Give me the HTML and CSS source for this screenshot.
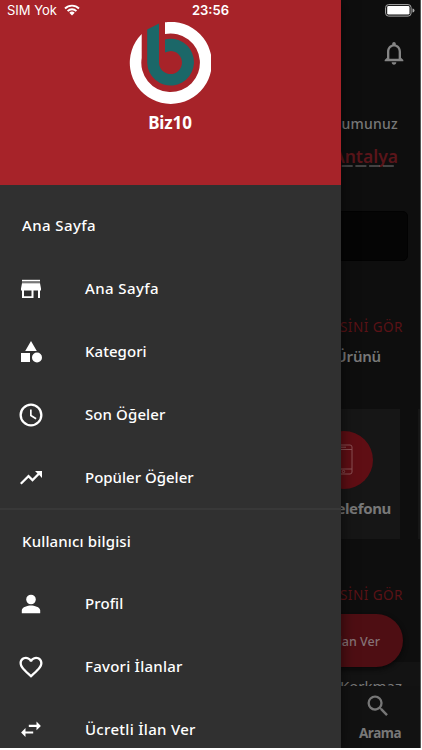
FILE: index.html
```html
<!DOCTYPE html>
<html lang="tr">
<head>
<meta charset="utf-8">
<title>Biz10</title>
<link rel="stylesheet" href="styles.css">
</head>
<body>
<div class="phone">
  <main class="page">
    <header class="topbar">
      <svg class="bell" viewBox="0 0 24 24"><path d="M12 22c1.100 0 2-.9 2-2h-4c0 1.100.9 2 2 2zm6-6v-5c0-3.070-1.630-5.640-4.500-6.320V4c0-.83-.67-1.500-1.500-1.500s-1.500.67-1.500 1.500v.68C7.640 5.360 6 7.920 6 11v5l-2 2v1h16v-1l-2-2zm-2 1H8v-6c0-2.480 1.510-4.500 4-4.500s4 2.020 4 4.500v6z"/></svg>
    </header>
    <section class="location">
      <div class="location-label"><span>Konumunuz</span></div>
      <div class="city"><span>Antalya</span></div>
      <svg class="dashes" viewBox="0 0 70 2"><path d="M0 1H68" stroke="#777" stroke-width="1" stroke-dasharray="11 2.700"/></svg>
    </section>
    <div class="searchbox"></div>
    <div class="see-all first"><span>HEPSİNİ GÖR</span></div>
    <div class="product">Ürünü</div>
    <section class="cards">
      <article class="card">
        <div class="disc"><svg viewBox="0 0 20 32"><rect x="1" y="1" width="17" height="29" rx="2"/><path d="M1 5.500h17M1 25h17M7 3.200h5"/><circle cx="9.500" cy="27.500" r="1.200"/></svg></div>
        <div class="card-title"><span>Cep Telefonu</span></div>
      </article>
      <article class="card next"></article>
    </section>
    <div class="see-all second"><span>HEPSİNİ GÖR</span></div>
    <section class="listing"><span>Korkmaz</span></section>
    <nav class="bottom">
      <div class="tab">
        <svg viewBox="0 0 24 24"><path d="M15.500 14h-.79l-.28-.27A6.471 6.471 0 0 0 16 9.500 6.500 6.500 0 1 0 9.500 16c1.610 0 3.090-.59 4.230-1.570l.27.28v.79l5 4.990L20.490 19l-4.990-5zm-6 0C7.010 14 5 11.990 5 9.500S7.010 5 9.500 5 14 7.010 14 9.500 11.990 14 9.500 14z"/></svg>
        <span>Arama</span>
      </div>
    </nav>
    <button class="post"><span>İlan Ver</span></button>
  </main>

  <aside class="drawer">
    <div class="brand">
      <svg class="logo" viewBox="0 0 82 82">
        <path class="ring" d="M36 0.300A41 41 0 1 1 12.700 12V36A29.300 29.300 0 1 0 36 12Z"/>
        <path class="letter" d="M18.200 7.500L30 1.500V41A11.500 11.500 0 1 0 36 30.500V17.400A23.400 23.400 0 1 1 18.200 41Z"/>
      </svg>
      <h1><span>Biz10</span></h1>
    </div>
    <section class="group">
      <h2>Ana Sayfa</h2>
      <div class="item"><svg viewBox="0 0 24 24"><path d="M21 2.800H3v1.700h18V2.800z"/><path class="dim" d="M3 4.500h18V6.200H3z"/><path d="M22 13.500v-2L21 6.200H3l-1 5.300v2h1V21h11.500v-7.500H19V21h2v-7.500h1zm-9.500 5.700H5v-5.700h7.500v5.700z"/></svg><span>Ana Sayfa</span></div>
      <div class="item"><svg viewBox="0 0 24 24"><path d="M12 1L6.200 11h11.600zM2 13h9v9H2z"/><circle cx="18" cy="17.500" r="5"/></svg><span class="kategori">Kategori</span></div>
      <div class="item"><svg viewBox="0 0 24 24"><path d="M11.990.5C5.700.5.5 5.700.5 12s5.200 11.500 11.490 11.500C18.300 23.500 23.500 18.300 23.500 12S18.300.5 11.990.5zM12 21.200a9.200 9.200 0 1 1 0-18.400 9.200 9.200 0 0 1 0 18.400zM12.700 6.500H11v6.500l5.700 3.400.85-1.400-4.850-2.900z"/></svg><span class="recent">Son Öğeler</span></div>
      <div class="item"><svg viewBox="0 0 24 24"><path d="M16 5l2.500 2.500-5 5-4-4L1 17l1.600 1.600 6.900-6.900 4 4 6.700-6.600L23 12V5z"/></svg><span class="popular">Popüler Öğeler</span></div>
    </section>
    <section class="group divided">
      <h2 class="user">Kullanıcı bilgisi</h2>
      <div class="item"><svg viewBox="0 0 24 24"><circle cx="12" cy="7.500" r="4.800"/><path d="M12 13.500c-3.100 0-9.200 1.500-9.200 4.800v3h18.400v-3c0-3.300-6.100-4.800-9.200-4.800z"/></svg><span class="profile">Profil</span></div>
      <div class="item"><svg viewBox="0 0 24 24"><path transform="translate(-1.800 -1.800) scale(1.150)" d="M16.500 3c-1.740 0-3.410.81-4.500 2.090C10.910 3.810 9.240 3 7.500 3 4.420 3 2 5.420 2 8.500c0 3.780 3.400 6.860 8.550 11.540L12 21.350l1.450-1.320C18.600 15.360 22 12.280 22 8.500 22 5.420 19.580 3 16.500 3zm-4.400 15.550l-.1.100-.1-.1C7.140 14.240 4 11.390 4 8.500 4 6.500 5.500 5 7.500 5c1.540 0 3.040.99 3.570 2.360h1.870C13.460 5.990 14.960 5 16.500 5c2 0 3.500 1.500 3.500 3.500 0 2.890-3.140 5.740-7.900 10.050z"/></svg><span class="favorites">Favori İlanlar</span></div>
      <div class="item"><svg viewBox="0 0 24 24"><path transform="translate(-1.200 -2) scale(1.100)" d="M6.990 11L3 15l3.990 4v-3H14v-2H6.990v-3zM21 9l-3.990-4v3H10v2h7.010v3L21 9z"/></svg><span class="paid">Ücretli İlan Ver</span></div>
    </section>
  </aside>

  <div class="status">
    <span class="carrier">SIM Yok</span>
    <svg class="wifi" viewBox="0 0 16 12"><path d="M1 4.500A10 10 0 0 1 15 4.500M3.600 7.100A6.300 6.300 0 0 1 12.400 7.100" fill="none" stroke="#fff" stroke-width="1.900"/><path d="M8 11.500L5.300 8.700A4 4 0 0 1 10.700 8.700Z" fill="#fff"/></svg>
    <span class="time">23:56</span>
    <svg class="battery" viewBox="0 0 30 13"><rect x=".6" y=".6" width="25.500" height="11.500" rx="3" fill="none" stroke="#aaa"/><rect x="2.200" y="2.100" width="22.300" height="8.500" rx="1.300" fill="#fff"/><path d="M27.500 4.500a2 2 0 0 1 0 4z" fill="#aaa"/></svg>
  </div>
</div>
</body>
</html>
```
FILE: styles.css
```css
* { box-sizing: border-box; }
body { margin: 0; background: #fff; font-family: "Noto Sans", sans-serif; }
svg { display: block; flex: none; }
.phone { position: relative; width: 421px; height: 748px; overflow: hidden; background: #0e0e0e; color: #fff; border-right: 1px solid #555; }
.page { display: flex; flex-direction: column; height: 748px; width: 421px; color: #787878; }
.topbar { height: 114px; padding: 39px 13px 0 0; display: flex; justify-content: flex-end; align-items: flex-start; }
.bell { width: 28px; height: 28px; fill: #858585; }
.location { height: 97px; padding-right: 23px; display: flex; flex-direction: column; align-items: flex-end; }
.location-label { font: 500 14px/20px "Noto Sans", sans-serif; letter-spacing: .25px; }
.city { margin-top: 11px; font: 600 17.500px/22px "Noto Sans", sans-serif; color: #5a151a; }
.dashes { width: 70px; height: 2px; margin-top: -2px; }
.searchbox { height: 50px; margin: 0 13px 0 16px; border: 1px solid #020202; border-radius: 5px; background: #050505; }
.see-all { height: 20px; padding-right: 18px; text-align: right; font-size: 13.500px; line-height: 20px; letter-spacing: .5px; color: #5a1216; }
.first { margin-top: 56px; }
.product { height: 22px; margin-top: 8px; padding-right: 40px; text-align: right; font-size: 15px; font-weight: 600; line-height: 22px; letter-spacing: -.2px; }
.cards { height: 130px; margin-top: 42px; display: flex; gap: 18px; padding-left: 288px; overflow: hidden; }
.card { flex: none; width: 112px; background: #161616; display: flex; flex-direction: column; align-items: center; padding-top: 22px; }
.disc { width: 58px; height: 58px; border-radius: 50%; background: #5f0e14; display: grid; place-items: center; }
.disc svg { width: 20px; height: 32px; fill: none; stroke: #8b5053; stroke-width: 1; }
.card-title { margin-top: 8px; font-size: 15px; font-weight: 700; line-height: 22px; letter-spacing: -.35px; white-space: nowrap; align-self: flex-end; padding-right: 9px; }
.second { margin-top: 46px; }
.listing { height: 24px; margin-top: 57px; background: #131313; padding: 12px 19px 0 0; text-align: right; font-size: 15px; line-height: 24px; overflow: hidden; }
.bottom { height: 62px; background: #121212; display: flex; justify-content: flex-end; padding: 6px 21px 0 0; position: relative; }
.tab { width: 40px; display: flex; flex-direction: column; align-items: center; font-size: 13.500px; font-weight: 700; line-height: 20px; letter-spacing: -.5px; white-space: nowrap; }
.tab svg { width: 28px; height: 28px; margin-right: 4px; fill: #777; }
.tab span { margin-top: 3px; }
.post { position: absolute; left: 280px; top: 614px; width: 123px; height: 53px; padding: 2px 23px 0 0; border: 0; border-radius: 27px; background: #4e0e13; color: #857376; font: 500 12.500px/20px "Noto Sans", sans-serif; text-align: right; box-shadow: 0 2px 5px #070707; }
.drawer { position: absolute; left: 0; top: 0; width: 341px; height: 748px; background: #303030; overflow: hidden; box-shadow: 0 0 14px rgba(0,0,0,.6); }
.brand { height: 185px; padding: 22px 1px 0 0; background: #a72329; display: flex; flex-direction: column; align-items: center; }
.logo { width: 82px; height: 82px; }
.ring { fill: #fff; }
.letter { fill: #1b6768; }
h1, h2 { margin: 0; }
h1 { margin-top: 7px; font-size: 17px; font-weight: 700; line-height: 24px; letter-spacing: -.1px; }
.group { padding-top: 9px; }
.divided { padding-top: 0; border-top: 2px solid #383838; margin-top: -1px; }
h2 { height: 63px; padding-left: 22px; font-size: 15px; font-weight: 500; line-height: 63px; letter-spacing: .4px; }
.item { height: 63px; padding-left: 19px; display: flex; align-items: center; font-size: 15px; font-weight: 500; letter-spacing: .4px; white-space: nowrap; }
.item span { padding-bottom: 1px; }
.item svg { width: 24px; height: 24px; margin-right: 42px; fill: #fff; }
.item .dim { fill: #777; }
.divided .item { position: relative; top: -1px; }
.kategori { letter-spacing: .05px; }
.recent { letter-spacing: .1px; }
.popular { letter-spacing: 0; }
.user { letter-spacing: .15px; }
.profile { letter-spacing: .1px; }
.favorites { letter-spacing: .25px; }
.paid { letter-spacing: .3px; }
.status { position: absolute; left: 0; top: 0; width: 421px; height: 21px; display: flex; align-items: center; padding-left: 7px; font: 13px/20px Inter, sans-serif; }
.carrier { width: 50px; white-space: nowrap; margin-top: -1px; }
.wifi { width: 16px; height: 12px; margin: 0 0 1px 7px; }
.time { margin: -1px 0 0 112px; width: 40px; font-weight: 600; }
.battery { width: 30px; height: 13px; margin-left: 153px; }
```
